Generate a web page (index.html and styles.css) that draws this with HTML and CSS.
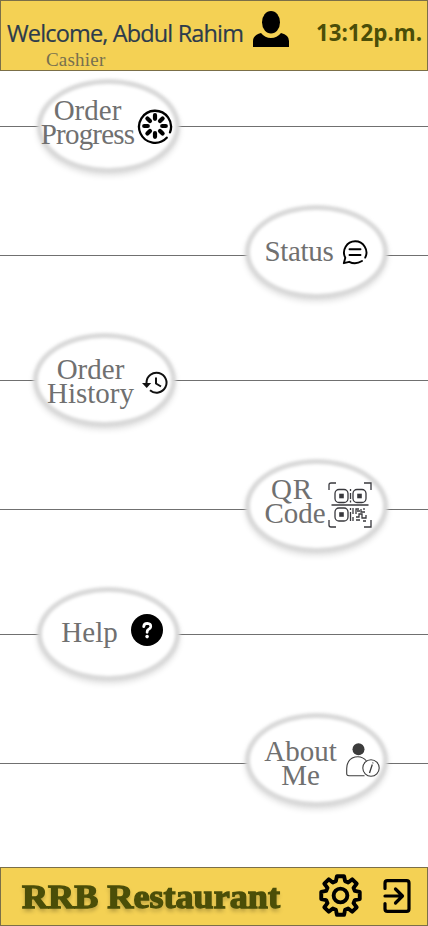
FILE: index.html
```html
<!DOCTYPE html>
<html lang="en">
<head>
<meta charset="utf-8">
<title>RRB Restaurant</title>
<link rel="stylesheet" href="styles.css">
</head>
<body>
<header class="top">
  <div class="user">
    <div class="welcome">Welcome, Abdul Rahim</div>
    <div class="role">Cashier</div>
  </div>
  <svg class="avatar" viewBox="0 0 36 36"><ellipse cx="18" cy="11.3" rx="9" ry="11.3"/><path d="M0 36V30Q0 24 8 22Q12 27 18 27T28 22Q36 24 36 30V36Z"/></svg>
  <div class="time">13:12p.m.</div>
</header>
<nav class="menu">
  <div class="row left"><a class="oval first">
    <span class="label progress">Order<br><span class="tight">Progress</span></span>
    <svg class="i-progress" viewBox="0 0 36 36" fill="none" stroke="#000" stroke-linecap="round"><path stroke-width="2.3" d="M29.7 29.7A16 16 0 1 1 33 24.4"/><path stroke-width="4.2" d="M18 7.2V10.8M18 25.2V28.8M7.2 18H10.8M25.2 18H28.8M10.4 10.4L13 13M23 23L25.6 25.6M10.4 25.6L13 23M23 13L25.6 10.4"/></svg>
  </a></div>
  <div class="row right"><a class="oval">
    <span class="label status">Status</span>
    <svg class="i-status" viewBox="0 0 26 26" fill="none" stroke="#000" stroke-width="1.9" stroke-linecap="round" stroke-linejoin="round"><path d="M23.2 18.6A11.2 11.2 0 1 0 3.3 18.7L1.8 24.2L7.2 22.8Q13.5 26 20 22"/><path d="M7.5 10.3H18.5M7.5 16H18.5"/></svg>
  </a></div>
  <div class="row left"><a class="oval third">
    <span class="label history">Order<br>History</span>
    <svg class="i-history" viewBox="0 0 26 24" fill="none" stroke="#111" stroke-width="2"><path d="M4.5 13V11.5A10 10 0 1 1 8 19.3"/><path d="M14 6.5V12.5L19 15.5"/><path fill="#111" stroke="none" d="M0 12H9.2L4.7 17Z"/></svg>
  </a></div>
  <div class="row right"><a class="oval">
    <span class="label qr"><span class="wide">QR</span><br>Code</span>
    <svg class="i-qr" viewBox="0 0 44 46" fill="none" stroke="#38383d" stroke-width="1.3"><path d="M1 8V3Q1 1 3 1H8M36 1H43V8M1 38V43Q1 45 3 45H8M36 45H43V38"/><path d="M3.5 23H40.5" stroke-width="1.6"/><rect x="7" y="7.5" width="13" height="13" rx="4"/><rect x="25" y="7.5" width="13" height="13" rx="4"/><rect x="7" y="26" width="13" height="13" rx="4"/><g fill="#38383d" stroke="none"><rect x="11.2" y="11.7" width="4.6" height="4.6"/><rect x="29.2" y="11.7" width="4.6" height="4.6"/><rect x="11.2" y="30.2" width="4.6" height="4.6"/></g><path d="M22.5 7V9M22.5 11V17M22.5 18.5V20.5M22.5 26V28M22.5 30V39M25 26V32M25 35V39M28 32V27H31M33 27V30H37M28 35H31V32H34V36H38V33M28 38H32M35 39H38M29 29H32M36 26V28"/></svg>
  </a></div>
  <div class="row left"><a class="oval fifth">
    <span class="label help">Help</span>
    <svg class="i-help" viewBox="0 0 32 32"><circle cx="16" cy="16" r="16"/><path d="M12.7 12.6Q13 9.4 16.3 9.4Q20 9.6 19.7 12.7Q19.4 14.6 17.4 15.5Q16.1 16.2 16.1 18.3" fill="none" stroke="#fff" stroke-width="2.8" stroke-linecap="round"/><circle cx="16.1" cy="22.6" r="1.8" fill="#fff"/></svg>
  </a></div>
  <div class="row right"><a class="oval">
    <span class="label about">About<br>Me</span>
    <svg class="i-about" viewBox="0 0 34 34" fill="none" stroke="#3c3c3c" stroke-width="1.1"><circle cx="12.5" cy="6.3" r="6" fill="#3c3c3c" stroke="none"/><path d="M18.5 32.7H3Q.7 32.7.7 30.5V25.5Q1 16 9 14Q16 12.5 20.5 18"/><circle cx="25" cy="25" r="8.2"/><path d="M26.3 21.5L23.5 30M27 19.5L26.8 20.4" stroke-width="1.3"/></svg>
  </a></div>
</nav>
<footer class="bottom">
  <div class="brand"><span>RRB Restaurant</span></div>
  <svg class="i-gear" viewBox="0 0 42 42" fill="none" stroke="#000" stroke-width="3.8" stroke-linejoin="round"><circle cx="21" cy="21" r="6.7"/><path d="M17.5 2.2H24.5L25.5 7L28.5 8.3L32.5 5.2L36.8 9.5L33.7 13.5L35 16.5L39.8 17.5V24.5L35 25.5L33.7 28.5L36.8 32.5L32.5 36.8L28.5 33.7L25.5 35L24.5 39.8H17.5L16.5 35L13.5 33.7L9.5 36.8L5.2 32.5L8.3 28.5L7 25.5L2.2 24.5V17.5L7 16.5L8.3 13.5L5.2 9.5L9.5 5.2L13.5 8.3L16.5 7Z"/></svg>
  <svg class="i-exit" viewBox="0 0 28 34" fill="none" stroke="#000" stroke-width="3.2" stroke-linecap="round" stroke-linejoin="round"><path d="M2 9.5V4Q2 1.6 4.4 1.6H23.6Q26 1.6 26 4V30Q26 32.4 23.6 32.4H4.4Q2 32.4 2 30V24.5M2 17H19M12.5 10L19.5 17L12.5 24"/></svg>
</footer>
</body>
</html>
```
FILE: styles.css
```css
* { box-sizing: border-box; }
body {
  margin: 0;
  width: 428px;
  height: 926px;
  display: flex;
  flex-direction: column;
  background: #fff;
  overflow: hidden;
  font-family: "Liberation Serif", serif;
}
svg { display: block; flex: none; }
.top {
  height: 71px;
  flex: none;
  display: flex;
  align-items: flex-start;
  background: #f4d154;
  border: 1px solid #7b6f48;
}
.user { width: 252px; padding: 17px 0 0 6px; white-space: nowrap; }
.welcome {
  font: 23.5px/30px "Open Sans", sans-serif;
  letter-spacing: -0.85px;
  color: #2c3b4c;
  -webkit-text-stroke: 0.2px #2c3b4c;
}
.role { margin-left: 39px; font-size: 19px; line-height: 24px; color: #77704f; letter-spacing: 0.2px; }
.avatar { width: 36px; height: 36px; margin-top: 10px; }
.time {
  margin: 17px 0 0 27px;
  font: bold 22.3px/30px "Open Sans", sans-serif;
  color: #4b4e08;
  white-space: nowrap;
}
.menu { height: 796px; flex: none; padding-top: 8px; }
.row { height: 94px; display: flex; background: linear-gradient(#707070, #707070) no-repeat; background-size: 100% 1px; }
.left { margin-bottom: 32px; background-position: 0 47px; }
.right { margin-bottom: 34px; padding-left: 245px; background-position: 0 50px; }
.left .oval { margin-left: 37px; }
.left .third { margin-left: 33px; }
.oval {
  position: relative;
  isolation: isolate;
  width: 143px;
  height: 94px;
  display: flex;
  align-items: flex-start;
}
.oval::before {
  content: "";
  position: absolute;
  z-index: -1;
  inset: 0;
  border: 5px solid #d9d9d9;
  border-radius: 50%;
  background: #fff;
  box-shadow: 0 3px 5px rgba(0,0,0,.11);
  filter: blur(1.6px);
}
.label {
  flex: none;
  font-size: 29px;
  line-height: 24px;
  text-align: center;
  color: #707070;
  white-space: nowrap;
}
.tight { letter-spacing: -0.8px; }
.progress { width: 95px; margin: 19px 0 0 3px; }
.i-progress { width: 36px; height: 36px; margin: 29px 0 0 2px; }
.status { width: 70px; margin: 34px 0 0 19px; letter-spacing: -0.3px; }
.i-status { width: 26px; height: 26px; margin: 34px 0 0 8px; }
.history { width: 87px; margin: 24px 0 0 14px; }
.i-history { width: 26px; height: 24px; margin: 38px 0 0 8px; }
.qr { width: 62px; margin: 18px 0 0 19px; }
.wide { margin-right: 6px; letter-spacing: 0.8px; }
.i-qr { width: 44px; height: 46px; margin: 23px 0 0 2px; }
.help { width: 57px; margin: 33px 0 0 24px; }
.i-help { width: 32px; height: 32px; margin: 27px 0 0 13px; }
.about { width: 73px; margin: 26px 0 0 19px; }
.i-about { width: 34px; height: 34px; margin: 30px 0 0 9px; }
.bottom {
  height: 59px;
  flex: none;
  display: flex;
  align-items: flex-start;
  background: #f4d154;
  border: 1px solid #7b6f48;
}
.brand {
  width: 318px;
  padding: 10px 0 0 21px;
  font-size: 33px;
  font-weight: bold;
  line-height: 38px;
  color: #4b4e08;
  -webkit-text-stroke: 1.3px #4b4e08;
  text-shadow: 0 3px 4px rgba(0,0,0,.3);
  white-space: nowrap;
}
.brand span { display: inline-block; transform: scaleX(1.095); transform-origin: left; }
.i-gear { width: 43px; height: 43px; margin-top: 6px; }
.i-exit { width: 28px; height: 34px; margin: 11px 0 0 21px; }
```
